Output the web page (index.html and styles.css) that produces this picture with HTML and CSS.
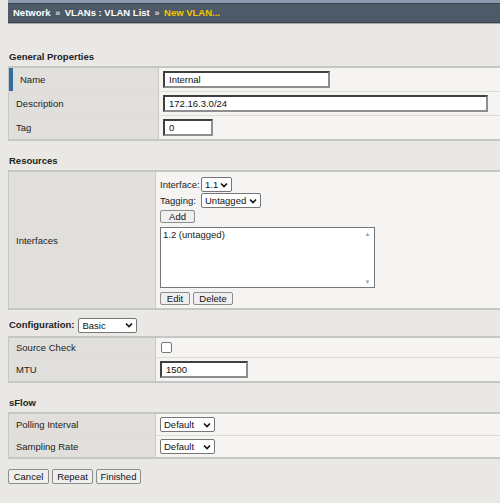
FILE: index.html
```html
<!DOCTYPE html>
<html lang="en">
<head>
    <meta charset="UTF-8">
    <title>New VLAN</title>
    <link rel="stylesheet" href="styles.css">
</head>
<body>
    <div class="crumbs">
        <span class="crumb">Network</span>
        <span class="sep">&raquo;</span>
        <span class="crumb">VLANs : VLAN List</span>
        <span class="sep">&raquo;</span>
        <span class="crumb current">New VLAN...</span>
    </div>

    <div class="content">
        <div class="section-title first">General Properties</div>
        <table class="props wide">
            <tr>
                <td class="label active">Name</td>
                <td class="value"><input type="text" class="field name-field" value="Internal"></td>
            </tr>
            <tr>
                <td class="label">Description</td>
                <td class="value"><input type="text" class="field desc-field" value="172.16.3.0/24"></td>
            </tr>
            <tr>
                <td class="label">Tag</td>
                <td class="value"><input type="text" class="field tag-field" value="0"></td>
            </tr>
        </table>

        <div class="section-title">Resources</div>
        <table class="props">
            <tr>
                <td class="label">Interfaces</td>
                <td class="value iface-cell">
                    <div class="iface-grid">
                        <span>Interface:</span>
                        <select class="dropdown sel-iface"><option>1.1</option></select>
                        <span>Tagging:</span>
                        <select class="dropdown sel-tag"><option>Untagged</option></select>
                    </div>
                    <button class="btn btn-add">Add</button>
                    <div class="listbox">
                        <div class="list-items">1.2 (untagged)</div>
                        <div class="list-scroll">
                            <span>&#9650;</span>
                            <span>&#9660;</span>
                        </div>
                    </div>
                    <div class="btn-row">
                        <button class="btn btn-edit">Edit</button>
                        <button class="btn btn-delete">Delete</button>
                    </div>
                </td>
            </tr>
        </table>

        <div class="section-title config-title">
            Configuration:
            <select class="dropdown sel-basic"><option>Basic</option></select>
        </div>
        <table class="props">
            <tr class="short">
                <td class="label">Source Check</td>
                <td class="value"><input type="checkbox" class="check"></td>
            </tr>
            <tr>
                <td class="label">MTU</td>
                <td class="value"><input type="text" class="field mtu-field" value="1500"></td>
            </tr>
        </table>

        <div class="section-title">sFlow</div>
        <table class="props compact">
            <tr>
                <td class="label">Polling Interval</td>
                <td class="value"><select class="dropdown sel-default"><option>Default</option></select></td>
            </tr>
            <tr>
                <td class="label">Sampling Rate</td>
                <td class="value"><select class="dropdown sel-default"><option>Default</option></select></td>
            </tr>
        </table>

        <div class="actions">
            <button class="btn btn-big btn-cancel">Cancel</button>
            <button class="btn btn-big btn-repeat">Repeat</button>
            <button class="btn btn-big btn-finish">Finished</button>
        </div>
    </div>
</body>
</html>
```

FILE: styles.css
```css
body {
    margin: 0;
    background-color: #e9e8e5;
    font-family: 'Liberation Sans', Arial, sans-serif;
    font-size: 9.5px;
    color: #222;
    overflow: hidden;
}

/* breadcrumb bar */
.crumbs {
    margin-left: 8px;
    height: 20px;
    line-height: 20px;
    padding-left: 5px;
    background-color: #4e5a67;
    border-top: 3px solid #8b9bad;
    border-bottom: 1px solid #a8a8a8;
    box-shadow: inset 0 1px 0 #39434d, inset 0 -1px 0 #39434d;
    font-weight: bold;
    color: #fff;
}

.crumb.current {
    color: #f5c400;
}

.sep {
    font-size: 9px;
    color: #d8dce0;
    margin: 0 2px;
}

.content {
    padding-left: 8px;
}

.section-title {
    font-weight: bold;
    line-height: 14px;
    margin: 13px 0 2px 1px;
}

.section-title.first {
    margin-top: 26px;
}

.config-title {
    display: flex;
    align-items: center;
    gap: 4px;
    height: 16px;
    margin: 7px 0 3px 1px;
}

/* property tables */
.props {
    width: 100%;
    border-collapse: collapse;
    table-layout: fixed;
    border-top: 2px solid #c6c6c4;
    border-bottom: 2px solid #c6c6c4;
    border-left: 1px solid #c6c6c4;
}

.props td {
    padding: 0;
    height: 23px;
    border-bottom: 1px solid #dcdbd8;
    vertical-align: middle;
}

.props tr:last-child td {
    border-bottom: none;
}

.props tr.short td {
    height: 19px;
}

.props.compact td {
    height: 21px;
}

.props .label {
    box-sizing: border-box;
    width: 147px;
    padding-left: 7px;
    background-color: #e0dfdc;
    border-right: 1px solid #c9c8c5;
}

.props.wide .label {
    width: 150px;
}

.props .label.active {
    padding-left: 11px;
    box-shadow: inset 4px 0 0 #356c9e;
}

.props .value {
    padding-left: 4px;
    background-color: #f5f4f2;
}

/* text inputs */
.field {
    box-sizing: border-box;
    display: block;
    height: 17px;
    padding: 0 4px;
    border: 2px solid;
    border-color: #404040 #8e8e8e #8e8e8e #404040;
    background: #fff;
    font: inherit;
    color: #111;
}

.name-field { width: 167px; }
.desc-field { width: 325px; }
.tag-field { width: 50px; }
.mtu-field { width: 88px; }

/* selects */
.dropdown {
    appearance: none;
    box-sizing: border-box;
    height: 15px;
    padding: 0 0 0 3px;
    border: 1px solid #767676;
    border-radius: 2px;
    background: #fff url("data:image/svg+xml,%3Csvg xmlns='http://www.w3.org/2000/svg' width='8' height='6'%3E%3Cpath d='M1 1.5l3 3 3-3' fill='none' stroke='%23111' stroke-width='1.6'/%3E%3C/svg%3E") no-repeat right 3px center;
    font: inherit;
    color: #111;
    line-height: 13px;
}

.sel-iface { width: 31px; }
.sel-tag { width: 60px; }
.sel-basic { width: 59px; font-weight: normal; }
.sel-default { width: 55px; display: block; }

/* interface editor */
.props .iface-cell {
    padding: 5px 0 3px 4px;
}

.iface-grid {
    display: grid;
    grid-template-columns: 39px auto;
    column-gap: 2px;
    row-gap: 1px;
    align-items: center;
    justify-items: start;
}

.listbox {
    box-sizing: border-box;
    display: flex;
    width: 215px;
    height: 61px;
    margin: 4px 0;
    border: 1px solid #767676;
    background: #fff;
}

.list-items {
    flex: 1;
    padding: 1px 2px;
}

.list-scroll {
    width: 13px;
    display: flex;
    flex-direction: column;
    justify-content: space-between;
    align-items: center;
    padding: 3px 0 2px;
    font-size: 6px;
    color: #a3a3a3;
}

.btn {
    box-sizing: border-box;
    height: 13px;
    padding: 0;
    border: 1px solid #8d8d8d;
    border-radius: 2px;
    background: #efefef;
    font: inherit;
    color: #111;
    line-height: 11px;
    cursor: pointer;
}

.btn-add {
    display: block;
    width: 35px;
    margin-top: 2px;
}

.btn-row {
    display: flex;
    gap: 3px;
}

.btn-edit { width: 30px; }
.btn-delete { width: 40px; }

.check {
    appearance: none;
    display: block;
    width: 11px;
    height: 11px;
    margin: 0 0 0 1px;
    border: 1px solid #767676;
    border-radius: 2px;
    background: #fff;
}

.actions {
    display: flex;
    gap: 3px;
    margin-top: 10px;
}

.btn-big {
    height: 15px;
    line-height: 13px;
}

.btn-cancel { width: 41px; }
.btn-repeat { width: 41px; }
.btn-finish { width: 45px; }
```
